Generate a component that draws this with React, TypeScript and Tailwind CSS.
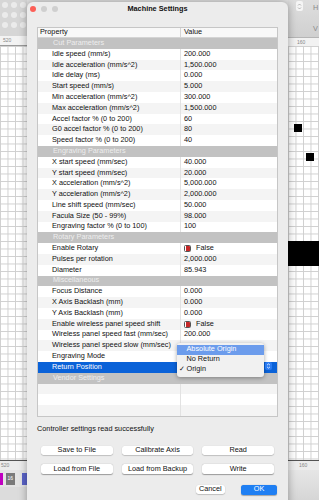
// Machine Settings dialog over a laser canvas

import React from 'react';

type Row =
  | { kind: 'section'; label: string }
  | { kind: 'item'; label: string; value: string; toggle?: boolean; selected?: boolean }
  | { kind: 'empty' };

const rows: Row[] = [
  { kind: 'section', label: 'Cut Parameters' },
  { kind: 'item', label: 'Idle speed (mm/s)', value: '200.000' },
  { kind: 'item', label: 'Idle acceleration (mm/s^2)', value: '1,500.000' },
  { kind: 'item', label: 'Idle delay (ms)', value: '0.000' },
  { kind: 'item', label: 'Start speed (mm/s)', value: '5.000' },
  { kind: 'item', label: 'Min acceleration (mm/s^2)', value: '300.000' },
  { kind: 'item', label: 'Max acceleration (mm/s^2)', value: '1,500.000' },
  { kind: 'item', label: 'Accel factor % (0 to 200)', value: '60' },
  { kind: 'item', label: 'G0 accel factor % (0 to 200)', value: '80' },
  { kind: 'item', label: 'Speed factor % (0 to 200)', value: '40' },
  { kind: 'section', label: 'Engraving Parameters' },
  { kind: 'item', label: 'X start speed (mm/sec)', value: '40.000' },
  { kind: 'item', label: 'Y start speed (mm/sec)', value: '20.000' },
  { kind: 'item', label: 'X acceleration (mm/s^2)', value: '5,000.000' },
  { kind: 'item', label: 'Y acceleration (mm/s^2)', value: '2,000.000' },
  { kind: 'item', label: 'Line shift speed (mm/sec)', value: '50.000' },
  { kind: 'item', label: 'Facula Size (50 - 99%)', value: '98.000' },
  { kind: 'item', label: 'Engraving factor % (0 to 100)', value: '100' },
  { kind: 'section', label: 'Rotary Parameters' },
  { kind: 'item', label: 'Enable Rotary', value: 'False', toggle: true },
  { kind: 'item', label: 'Pulses per rotation', value: '2,000.000' },
  { kind: 'item', label: 'Diameter', value: '85.943' },
  { kind: 'section', label: 'Miscellaneous' },
  { kind: 'item', label: 'Focus Distance', value: '0.000' },
  { kind: 'item', label: 'X Axis Backlash (mm)', value: '0.000' },
  { kind: 'item', label: 'Y Axis Backlash (mm)', value: '0.000' },
  { kind: 'item', label: 'Enable wireless panel speed shift', value: 'False', toggle: true },
  { kind: 'item', label: 'Wireless panel speed fast (mm/sec)', value: '200.000' },
  { kind: 'item', label: 'Wireless panel speed slow (mm/sec)', value: '' },
  { kind: 'item', label: 'Engraving Mode', value: '' },
  { kind: 'item', label: 'Return Position', value: '', selected: true },
  { kind: 'section', label: 'Vendor Settings' },
  { kind: 'empty' },
  { kind: 'empty' },
  { kind: 'empty' },
];

const gridBg =
  'bg-white bg-[linear-gradient(to_right,#cfcfcf_1px,transparent_1px),linear-gradient(to_bottom,#cfcfcf_1px,transparent_1px)] bg-[size:7.5px_7.5px]';

const Toggle: React.FC = () => (
  <span className="flex h-[7px] w-[7px] justify-end overflow-hidden rounded-[1.5px] border-[0.5px] border-[#555] bg-white">
    <span className="h-full w-[4px] bg-[#c62828]" />
  </span>
);

const TableRow: React.FC<{ row: Row; index: number }> = ({ row, index }) => {
  if (row.kind === 'section') {
    return (
      <div className="flex h-[10.8px] items-center bg-[#c2c2c2] pl-[15px] text-[#eeeeee]">{row.label}</div>
    );
  }
  const stripe = index % 2 === 1 ? 'bg-white' : 'bg-[#f4f4f4]';
  if (row.kind === 'empty') {
    return (
      <div className={`flex h-[10.8px] ${stripe}`}>
        <div className="w-[143px] border-r border-[#e2e2e2]" />
      </div>
    );
  }
  const bg = row.selected ? 'bg-[#0a62d8] text-white' : stripe;
  return (
    <div className={`flex h-[10.8px] items-center ${bg}`}>
      <div
        className={`flex h-full w-[143px] shrink-0 items-center whitespace-nowrap pl-[14px] ${
          row.selected ? '' : 'border-r border-[#e2e2e2]'
        }`}
      >
        {row.label}
      </div>
      <div className="flex items-center gap-[5px] whitespace-nowrap pl-[3px]">
        {row.toggle && <Toggle />}
        {row.value}
      </div>
    </div>
  );
};

const Btn: React.FC<{ label: string; className?: string }> = ({ label, className = '' }) => (
  <div
    className={`flex h-[9.5px] items-center justify-center rounded-[2.5px] bg-white shadow-[0_0.5px_1px_rgba(0,0,0,0.35)] ${className}`}
  >
    {label}
  </div>
);

const App: React.FC = () => {
  return (
    <div className="flex h-[500px] w-[319px] overflow-hidden bg-[#e2e2e2] font-['Liberation_Sans',Arial,sans-serif] text-[7.3px] text-[#111]">
      {/* Left canvas strip */}
      <div className="flex w-[27px] shrink-0 flex-col">
        <div className="grid h-[36px] grid-cols-3 content-start gap-[4px] bg-[#d6d6d6] px-[2px] pt-[2px]">
          {Array.from({ length: 9 }).map((_, i) => (
            <span key={i} className="h-[6px] w-[6px] rounded-full bg-[#ebebeb]" />
          ))}
        </div>
        <div className="flex h-[10px] items-center border-b border-[#9a9a9a] bg-[#f3f3f3] pl-[3px] text-[5px] text-[#888]">
          520
        </div>
        <div className={`flex-1 ${gridBg}`} />
        <div className="flex h-[10px] items-start border-t border-[#555] bg-[#ececec] text-[5px] text-[#888]">
          <span className="pl-[1px] pt-[1px]">520</span>
        </div>
        <div className="flex h-[17px] items-center gap-[2.5px] bg-[#e4e4e4]">
          <span className="h-[12px] w-[3px] bg-[#c000c0]" />
          <span className="flex h-[12px] w-[9.5px] items-center justify-center bg-[#7a7a7a] text-[5px] text-white">
            16
          </span>
          <span className="ml-[4px] h-[12px] w-[5px] bg-[#5a63c8]" />
        </div>
        <div className="h-[13px] bg-[#dcdcdc]" />
      </div>

      {/* Dialog window */}
      <div className="relative z-10 mt-[2px] flex h-[520px] w-[261px] shrink-0 flex-col rounded-t-[6px] bg-[#ececec] px-[10px] shadow-[0_0_8px_rgba(0,0,0,0.35)]">
        <div className="relative flex h-[14px] items-center justify-center">
          <div className="absolute left-[-7px] flex gap-[5px]">
            <span className="h-[6px] w-[6px] rounded-full bg-[#fc5f57]" />
            <span className="h-[6px] w-[6px] rounded-full bg-[#cfcfcf]" />
            <span className="h-[6px] w-[6px] rounded-full bg-[#cfcfcf]" />
          </div>
          <span className="font-bold">Machine Settings</span>
        </div>

        <div className="mt-[11px] border border-[#c6c6c6] bg-white">
          <div className="flex h-[10px] items-center border-b border-[#d4d4d4] bg-[#f8f8f8]">
            <div className="flex h-full w-[143px] items-center border-r border-[#d4d4d4] pl-[2px]">Property</div>
            <div className="pl-[3px]">Value</div>
          </div>
          {rows.map((row, i) => (
            <TableRow key={i} row={row} index={i} />
          ))}
        </div>

        <div className="mt-[7px]">Controller settings read successfully</div>

        <div className="mt-[11px] grid grid-cols-3 gap-x-[9px] gap-y-[9px] px-[4px]">
          <Btn label="Save to File" />
          <Btn label="Calibrate Axis" />
          <Btn label="Read" />
          <Btn label="Load from File" />
          <Btn label="Load from Backup" />
          <Btn label="Write" />
        </div>

        <div className="mt-[11px] flex justify-end gap-[16px] pr-[1px]">
          <Btn label="Cancel" className="w-[29.5px]" />
          <div className="flex h-[10px] w-[36px] items-center justify-center rounded-[2.5px] bg-[#1f7ff3] text-white shadow-[0_0.5px_1px_rgba(0,0,0,0.3)]">
            OK
          </div>
        </div>

        {/* Return Position popup */}
        <div className="absolute left-[150px] top-[341px] w-[87px] rounded-[3px] bg-[#f1f1f1] py-[2px] shadow-[0_1px_4px_rgba(0,0,0,0.35)]">
          <div className="flex h-[9.5px] items-center bg-[#6c9cec] text-white">
            <span className="w-[9.5px]" />
            Absolute Origin
          </div>
          <div className="flex h-[10px] items-center">
            <span className="w-[9.5px]" />
            No Return
          </div>
          <div className="flex h-[10px] items-center">
            <span className="w-[9.5px] pl-[1.5px]">✓</span>
            Origin
          </div>
        </div>
        <div className="absolute left-[238px] top-[360px] flex h-[8px] w-[7px] items-center justify-center rounded-[2px] bg-[#2a7bf2]">
          <svg width="5" height="6" viewBox="0 0 5 6" fill="none" stroke="white" strokeWidth="0.8">
            <path d="M1 2.2 L2.5 0.9 L4 2.2" />
            <path d="M1 3.8 L2.5 5.1 L4 3.8" />
          </svg>
        </div>
      </div>

      {/* Right canvas strip */}
      <div className="flex w-[31px] shrink-0 flex-col">
        <div className="flex h-[37px] bg-[linear-gradient(to_bottom,#dedede,#d0d0d0)]">
          <div className="ml-[8px] mt-[1px] flex h-[10px] w-[7px] flex-col items-center justify-center rounded-[2px] bg-[#f5f5f5]">
            <svg width="5" height="7" viewBox="0 0 5 7" fill="none" stroke="#999" strokeWidth="0.7">
              <path d="M1 2.5 L2.5 1 L4 2.5" />
              <path d="M1 4.5 L2.5 6 L4 4.5" />
            </svg>
          </div>
          <div className="ml-[10px] flex flex-col gap-[10px] pt-[3px] text-[#8a8a8a]">
            <span>H</span>
            <span>V</span>
          </div>
        </div>
        <div className="flex h-[9px] items-end border-t border-[#b5b5b5] bg-[#f2f2f2] pl-[9px] text-[5px] text-[#888]">
          160
        </div>
        <div className={`relative flex-1 ${gridBg}`}>
          <span className="absolute left-[6px] top-[78px] h-[8px] w-[8px] bg-black" />
          <span className="absolute left-[18px] top-[107px] h-[8px] w-[8px] bg-black" />
          <span className="absolute left-0 top-[195px] h-[25px] w-full bg-black" />
        </div>
        <div className="flex h-[10px] items-start border-t border-[#555] bg-[#ececec] pl-[11px] text-[5px] text-[#888]">
          <span className="pt-[1px]">160</span>
        </div>
        <div className="h-[30px] bg-[linear-gradient(to_bottom,#e6e6e6,#d6d6d6)]" />
      </div>
    </div>
  );
};

export default App;
